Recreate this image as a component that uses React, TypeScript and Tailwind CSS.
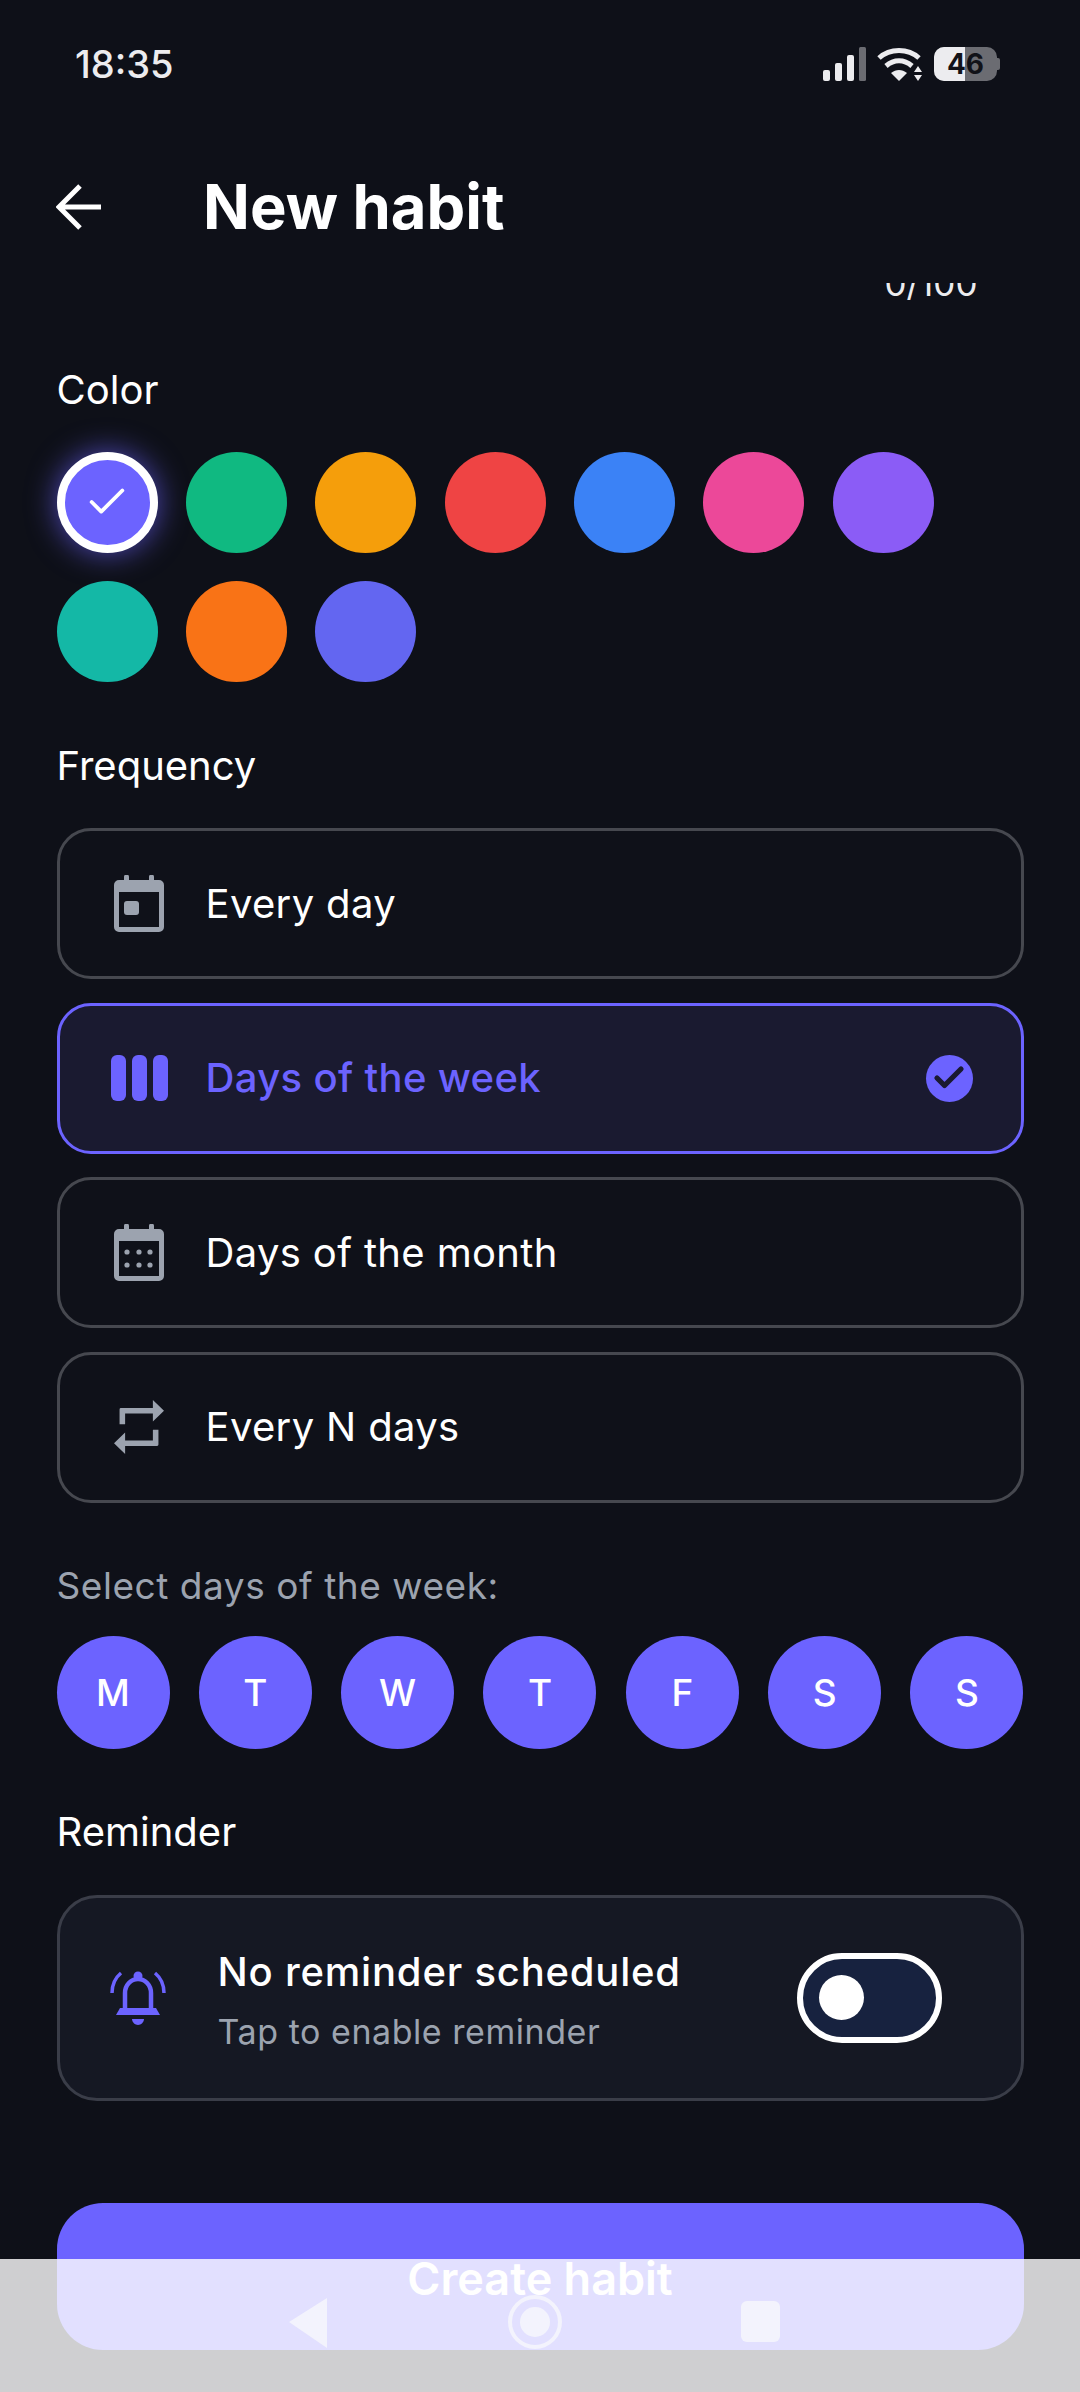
import React from 'react';
import { Check } from 'lucide-react';

const swatches = ['#6C63FF', '#10B981', '#F59E0B', '#EF4444', '#3B82F6', '#EC4899', '#8B5CF6', '#14B8A6', '#F97316', '#6366F1'];
const days = ['M', 'T', 'W', 'T', 'F', 'S', 'S'];

const CalendarBase: React.FC<{ children: React.ReactNode }> = ({ children }) => (
  <svg width="50" height="57" viewBox="0 0 50 57" fill="none">
    <path
      fillRule="evenodd"
      d="M10 2a2.5 2.5 0 0 1 5 0v3h20V2a2.5 2.5 0 0 1 5 0v3h5a5 5 0 0 1 5 5v42a5 5 0 0 1-5 5H5a5 5 0 0 1-5-5V10a5 5 0 0 1 5-5h5V2zM5 17v35h40V17H5z"
      fill="#9CA3AF"
    />
    {children}
  </svg>
);

const DayIcon = () => (
  <CalendarBase>
    <rect x="10" y="26" width="15" height="14" rx="3" fill="#9CA3AF" />
  </CalendarBase>
);

const WeekIcon = () => (
  <svg width="57" height="46" viewBox="0 0 57 46" fill="#6C63FF">
    <rect x="0" y="0" width="15" height="46" rx="6" />
    <rect x="21" y="0" width="15" height="46" rx="6" />
    <rect x="42" y="0" width="15" height="46" rx="6" />
  </svg>
);

const MonthIcon = () => (
  <CalendarBase>
    {[28, 41].map(y =>
      [13, 25, 36].map(x => <circle key={`${x}-${y}`} cx={x} cy={y} r="2.6" fill="#9CA3AF" />)
    )}
  </CalendarBase>
);

const RepeatIcon = () => (
  <svg width="50" height="54" viewBox="3 2 18 20" preserveAspectRatio="none" fill="#9CA3AF">
    <path d="M7 7h10v3l4-4-4-4v3H5.5a.5.5 0 0 0-.5.5V11h2V7zm10 10H7v-3l-4 4 4 4v-3h11.5a.5.5 0 0 0 .5-.5V13h-2v4z" />
  </svg>
);

const BellIcon = () => (
  <svg width="56" height="54" viewBox="0 0 56 54" fill="none">
    <path d="M15 38V22c0-8 6-14 13-14s13 6 13 14v16" stroke="#6C63FF" strokeWidth="4.5" />
    <circle cx="28" cy="5" r="4.5" fill="#6C63FF" />
    <path d="M6 44l4-7h36l4 7H6z" fill="#6C63FF" />
    <path d="M22 48h12c0 3-3 6-6 6s-6-3-6-6z" fill="#6C63FF" />
    <path d="M11 2C5 7 2 14 2 22" stroke="#6C63FF" strokeWidth="3.5" />
    <path d="M45 2c6 5 9 12 9 20" stroke="#6C63FF" strokeWidth="3.5" />
  </svg>
);

const options = [
  { label: 'Every day', icon: <DayIcon /> },
  { label: 'Days of the week', icon: <WeekIcon />, selected: true },
  { label: 'Days of the month', icon: <MonthIcon /> },
  { label: 'Every N days', icon: <RepeatIcon /> },
];

const StatusIcons = () => (
  <div className="flex items-center gap-[11px]">
    <svg width="43" height="34" viewBox="0 0 43 34">
      <rect x="0" y="23" width="7" height="11" rx="2" fill="#ECECEF" />
      <rect x="12" y="16" width="7" height="18" rx="2" fill="#ECECEF" />
      <rect x="24" y="8" width="7" height="26" rx="2" fill="#ECECEF" />
      <rect x="36" y="0" width="7" height="34" rx="1.5" fill="#6B6C72" />
    </svg>
    <svg width="46" height="36" viewBox="0 0 46 36" fill="none">
      <path d="M2 12C13 2 31 2 42 12" stroke="#ECECEF" strokeWidth="5" />
      <path d="M9 20c8-7 18-7 26 0" stroke="#ECECEF" strokeWidth="5" />
      <path d="M14 27c5-4 11-4 16 0l-8 8-8-8z" fill="#ECECEF" />
      <path d="M41 20l4 6h-8l4-6zM37 29h8l-4 6-4-6z" fill="#ECECEF" />
    </svg>
    <div className="flex items-center">
      <div className="relative flex h-[34px] w-[63px] items-center justify-center overflow-hidden rounded-[10px] bg-[#6B6C72]">
        <div className="absolute inset-y-0 left-0 w-[31px] bg-[#ECECEF]" />
        <span className="relative text-[28px] leading-none font-bold text-[#111218]">46</span>
      </div>
      <div className="h-[12px] w-[3px] rounded-r-[2px] bg-[#6B6C72]" />
    </div>
  </div>
);

const App: React.FC = () => {
  return (
    <div className="relative flex h-[2392px] w-[1080px] flex-col overflow-hidden bg-[#0E1018] font-['Inter',sans-serif] text-white">
      {/* Status bar */}
      <div className="flex h-[126px] items-center justify-between pt-[2px] pr-[80px] pl-[75px]">
        <span className="text-[38px] font-medium text-[#ECECEF]">18:35</span>
        <StatusIcons />
      </div>

      {/* Header */}
      <div className="flex h-[157px] items-center gap-[102px] pt-[5px] pl-[56px]">
        <svg width="45" height="46" viewBox="0 0 45 46" fill="none" stroke="white" strokeWidth="5">
          <path d="M45 23H4M24 2L3 23l21 21" />
        </svg>
        <h1 className="text-[61.5px] leading-none font-bold">New habit</h1>
      </div>

      {/* Scroll content */}
      <main className="flex min-h-0 flex-1 flex-col overflow-hidden px-[56.5px]">
        <p className="-mt-[20px] h-[40px] pr-[46px] text-right text-[35px] leading-[40px] text-[#ECECEF]">0/100</p>

        <section className="mt-[58.5px]">
          <h2 className="mb-[34px] text-[40px] leading-[56px]">Color</h2>
          <div className="flex w-[950px] flex-wrap gap-[28.4px]">
            {swatches.map((c, i) => (
              <div
                key={i}
                style={{ backgroundColor: c }}
                className={`flex h-[101px] w-[101px] items-center justify-center rounded-full ${
                  i === 0 ? 'border-[8px] border-white shadow-[0_0_30px_rgba(108,99,255,0.7)]' : ''
                }`}
              >
                {i === 0 && <Check size={46} strokeWidth={2} color="white" />}
              </div>
            ))}
          </div>
        </section>

        <section className="mt-[56.5px]">
          <h2 className="mb-[34px] text-[40px] leading-[56px]">Frequency</h2>
          <div className="flex flex-col gap-[23.5px]">
            {options.map(o => (
              <div
                key={o.label}
                className={`flex h-[151px] items-center rounded-[34px] border-[3px] pr-[48px] ${
                  o.selected ? 'border-[#6C63FF] bg-[#1A1A30]' : 'border-[#46484F] bg-[#0F1119]'
                }`}
              >
                <div className="flex w-[146px] shrink-0 items-center justify-center pl-[13px]">{o.icon}</div>
                <span
                  className={`flex-1 text-[40px] tracking-[0.35px] ${
                    o.selected ? 'font-medium text-[#6C63FF]' : 'text-white'
                  }`}
                >
                  {o.label}
                </span>
                {o.selected && (
                  <div className="flex h-[47px] w-[47px] items-center justify-center rounded-full bg-[#6C63FF]">
                    <Check size={36} strokeWidth={3.5} color="#1A1A30" />
                  </div>
                )}
              </div>
            ))}
          </div>
        </section>

        <section className="mt-[55px]">
          <h2 className="mb-[22px] text-[37px] leading-[56px] tracking-[0.55px] text-[#9CA3AF]">Select days of the week:</h2>
          <div className="flex justify-between">
            {days.map((d, i) => (
              <div
                key={i}
                className="flex h-[113px] w-[113px] items-center justify-center rounded-full bg-[#6C63FF] text-[37px] font-medium"
              >
                {d}
              </div>
            ))}
          </div>
        </section>

        <section className="mt-[55px]">
          <h2 className="mb-[35px] text-[40px] leading-[56px]">Reminder</h2>
          <div className="flex h-[206px] items-center rounded-[40px] border-[3px] border-[#3A3D48] bg-[#151823] pr-[79px] pl-[50px]">
            <BellIcon />
            <div className="ml-[52px] flex flex-1 flex-col gap-[14px] pt-[5px]">
              <span className="text-[40px] leading-[50px] font-medium tracking-[0.8px]">No reminder scheduled</span>
              <span className="text-[34px] leading-[42px] tracking-[0.55px] text-[#9CA3AF]">Tap to enable reminder</span>
            </div>
            <div className="flex h-[90px] w-[145px] items-center rounded-full border-[6px] border-white bg-[#17223F] pl-[16px]">
              <div className="h-[45px] w-[45px] rounded-full bg-white" />
            </div>
          </div>
        </section>

        <button className="mt-[102px] flex h-[147px] shrink-0 items-start justify-center rounded-[46px] bg-[#6C63FF] pt-[48px] text-[45px] leading-[56px] font-semibold text-white">
          Create habit
        </button>
      </main>

      {/* System navigation bar, drawn over the page */}
      <div className="absolute inset-x-0 bottom-0 flex h-[133px] items-start justify-center bg-white/80">
        <svg width="520" height="100" viewBox="0 0 520 100" className="mt-[35px] ml-[18px]">
          <path d="M38 4L0 28l38 26z" fill="#F3F3FD" />
          <circle cx="246" cy="28" r="25" fill="none" stroke="#F3F3FD" strokeWidth="4" />
          <circle cx="246" cy="28" r="15" fill="#F3F3FD" />
          <rect x="452" y="7" width="39" height="41" rx="6" fill="#F3F3FD" />
        </svg>
      </div>
    </div>
  );
};

export default App;
